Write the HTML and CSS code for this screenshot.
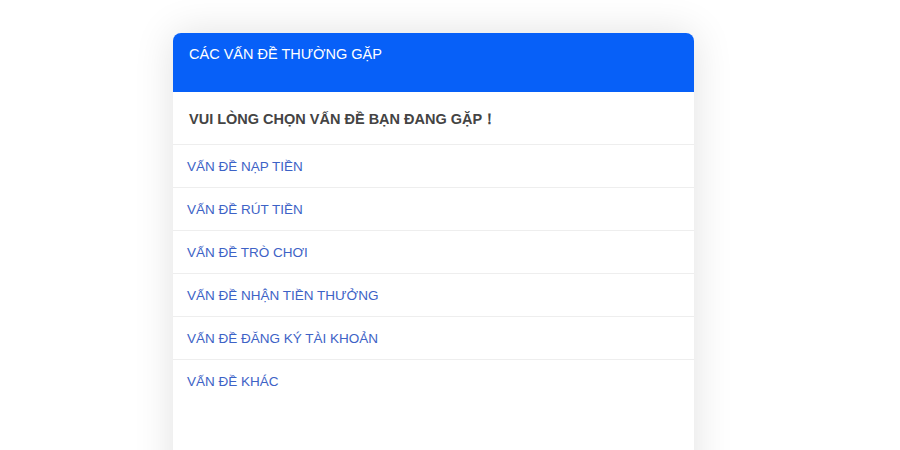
FILE: index.html
```html
<!DOCTYPE html>
<html lang="vi">
<head>
    <meta charset="UTF-8">
    <meta name="viewport" content="width=device-width, initial-scale=1.0">
    <title>Các vấn đề thường gặp</title>
    <link rel="stylesheet" href="styles.css">
</head>
<body>
    <div class="panel">
        <div class="panel-header">CÁC VẤN ĐỀ THƯỜNG GẶP</div>
        <div class="panel-title">VUI LÒNG CHỌN VẤN ĐỀ BẠN ĐANG GẶP！</div>
        <ul class="issue-list">
            <li><a href="#">VẤN ĐỀ NẠP TIỀN</a></li>
            <li><a href="#">VẤN ĐỀ RÚT TIỀN</a></li>
            <li><a href="#">VẤN ĐỀ TRÒ CHƠI</a></li>
            <li><a href="#">VẤN ĐỀ NHẬN TIỀN THƯỞNG</a></li>
            <li><a href="#">VẤN ĐỀ ĐĂNG KÝ TÀI KHOẢN</a></li>
            <li><a href="#">VẤN ĐỀ KHÁC</a></li>
        </ul>
    </div>
</body>
</html>
```

FILE: styles.css
```css
* {
    box-sizing: border-box;
    margin: 0;
    padding: 0;
}

html, body {
    height: 100%;
    overflow: hidden;
}

body {
    font-family: "Liberation Sans", Arial, sans-serif;
    background-color: #fff;
    padding-top: 33px;
}

.panel {
    width: 521px;
    margin-left: 173px;
    min-height: 480px;
    background: #fff;
    border-radius: 8px 8px 0 0;
    box-shadow: 0 0 40px rgba(0, 0, 0, 0.12);
}

.panel-header {
    height: 59px;
    padding: 12px 16px 0;
    background: #0760f8;
    color: #fff;
    font-size: 14.5px;
    line-height: 18px;
    border-radius: 8px 8px 0 0;
}

.panel-title {
    height: 53px;
    padding: 1px 16px 0;
    line-height: 52px;
    font-size: 14.5px;
    font-weight: bold;
    color: #444;
    border-bottom: 1px solid #eee;
}

.issue-list {
    list-style: none;
}

.issue-list li {
    height: 43px;
    border-bottom: 1px solid #eee;
}

.issue-list li:last-child {
    border-bottom: none;
}

.issue-list a {
    display: block;
    padding: 1px 14px 0;
    line-height: 42px;
    font-size: 13.5px;
    color: #3d62c6;
    text-decoration: none;
}
```
